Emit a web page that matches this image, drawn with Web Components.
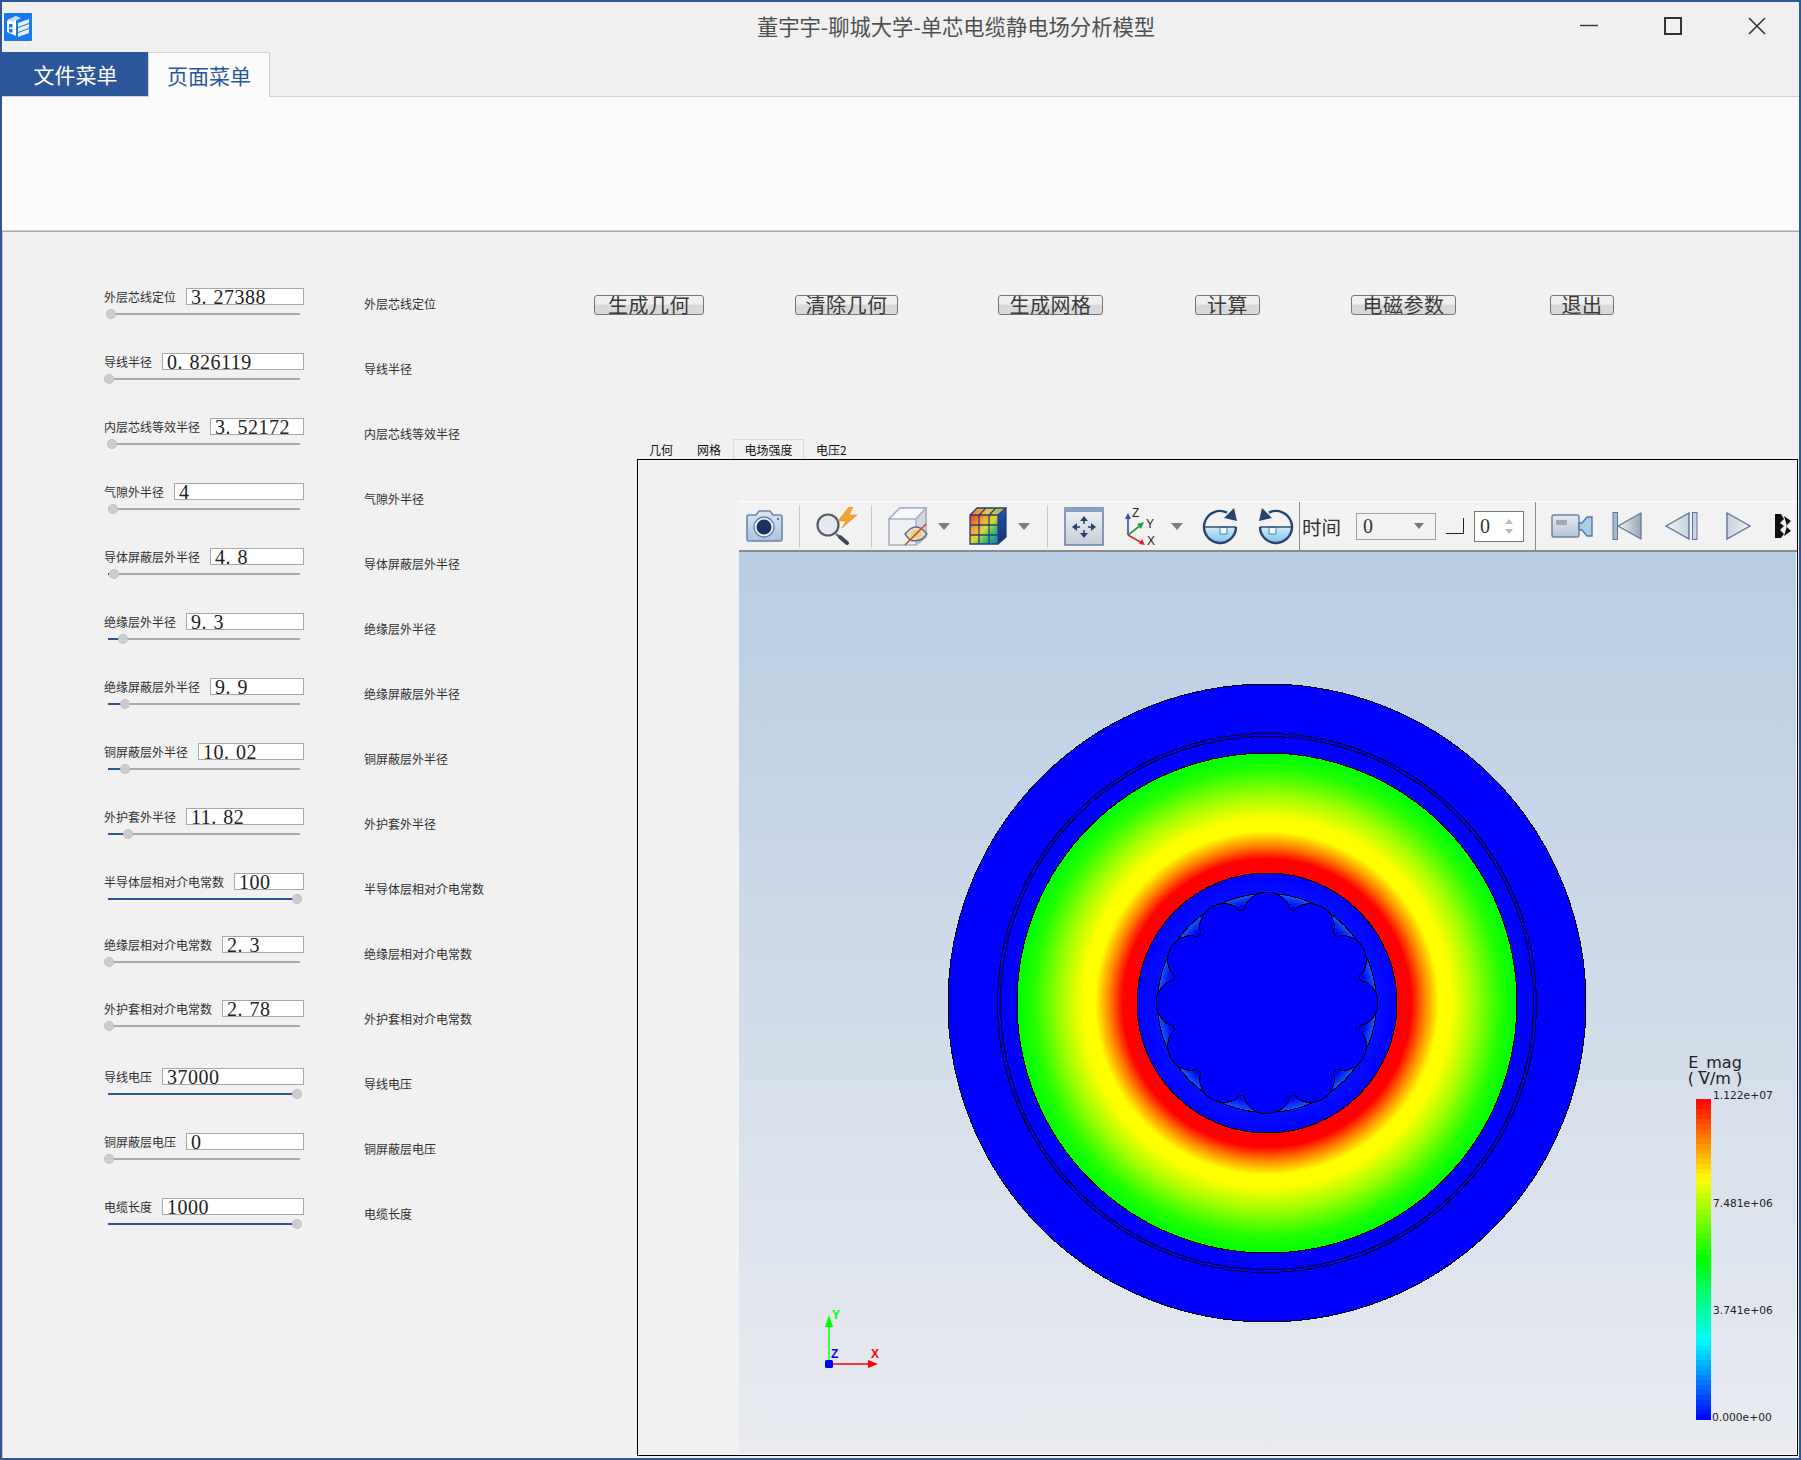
<!DOCTYPE html>
<html lang="zh">
<head>
<meta charset="utf-8">
<title>单芯电缆静电场分析模型</title>
<style>
    html, body { margin: 0; padding: 0; background: #f1f1f1; overflow: hidden; }
    body { font-family: "Noto Sans CJK SC", "Liberation Sans", sans-serif; }
</style>
</head>
<body>
<app-window>
    <title-bar slot="top">董宇宇-聊城大学-单芯电缆静电场分析模型</title-bar>
    <menu-tabs slot="top"></menu-tabs>
    <param-form>
        <param-row label="外层芯线定位" value="3.27388" at="3"></param-row>
        <param-row label="导线半径" value="0.826119" at="1"></param-row>
        <param-row label="内层芯线等效半径" value="3.52172" at="4"></param-row>
        <param-row label="气隙外半径" value="4" at="5"></param-row>
        <param-row label="导体屏蔽层外半径" value="4.8" at="6"></param-row>
        <param-row label="绝缘层外半径" value="9.3" at="15"></param-row>
        <param-row label="绝缘屏蔽层外半径" value="9.9" at="17"></param-row>
        <param-row label="铜屏蔽层外半径" value="10.02" at="17"></param-row>
        <param-row label="外护套外半径" value="11.82" at="20"></param-row>
        <param-row label="半导体层相对介电常数" value="100" at="189"></param-row>
        <param-row label="绝缘层相对介电常数" value="2.3" at="1" lift="2"></param-row>
        <param-row label="外护套相对介电常数" value="2.78" at="1" lift="3"></param-row>
        <param-row label="导线电压" value="37000" at="189"></param-row>
        <param-row label="铜屏蔽层电压" value="0" at="1"></param-row>
        <param-row label="电缆长度" value="1000" at="189"></param-row>
    </param-form>
    <action-bar slot="actions">
        <action-button>生成几何</action-button>
        <action-button style="margin-left:91px;width:103px">清除几何</action-button>
        <action-button style="margin-left:100px;width:105px">生成网格</action-button>
        <action-button style="margin-left:92px;width:65px">计算</action-button>
        <action-button style="margin-left:91px;width:105px">电磁参数</action-button>
        <action-button style="margin-left:94px;width:64px">退出</action-button>
    </action-bar>
    <result-panel slot="panel"></result-panel>
</app-window>

<script>
class AppWindow extends HTMLElement {
    constructor() {
        super();
        this.attachShadow({ mode: "open" });
        this.shadowRoot.innerHTML = `
            <style>
                :host {
                    display: flex;
                    flex-direction: column;
                    box-sizing: border-box;
                    width: 1801px;
                    height: 1460px;
                    border: 2px solid #2b579a;
                    background: #f1f1f1;
                }
                .main {
                    flex: 1;
                    display: flex;
                    min-height: 0;
                    border-left: 1px solid #c8c8c8;
                    margin-left: 0;
                }
                .right {
                    flex: 1;
                    display: flex;
                    flex-direction: column;
                    min-width: 0;
                    padding: 63px 1px 2px 0;
                }
                ::slotted(result-panel) { margin: 124px 0 0 43px; flex: 1; min-height: 0; }
            </style>
            <slot name="top"></slot>
            <div class="main">
                <slot></slot>
                <div class="right">
                    <slot name="actions"></slot>
                    <slot name="panel"></slot>
                </div>
            </div>
        `;
    }
}
customElements.define("app-window", AppWindow);

class TitleBar extends HTMLElement {
    constructor() {
        super();
        this.attachShadow({ mode: "open" });
        this.shadowRoot.innerHTML = `
            <style>
                :host {
                    display: flex;
                    align-items: center;
                    height: 50px;
                    background: #f0f0f0;
                    color: #505050;
                    font-size: 21.3px;
                }
                .logo { margin: 0 0 0 2px; width: 28px; height: 28px; flex: none; }
                .title {
                    flex: 1;
                    text-align: center;
                    padding: 0 0 4px 300px;
                    white-space: nowrap;
                }
                .btns { display: flex; gap: 66px; margin-right: 33px; position: relative; top: -1px; }
                .btns svg { width: 18px; height: 18px; display: block; }
            </style>
            <svg class="logo" viewBox="0 0 28 28">
                <rect width="28" height="28" rx="1" fill="#1878ee"/>
                <path d="M3 8 L12 3 L12 23 L3 19 Z" fill="#fff"/>
                <path d="M12 3 L17 5 L9 9 L3 7 Z" fill="#c9dcf5"/>
                <path d="M14 10 L25 6 V10 L14 14 Z M14 15 L25 11 V15 L14 19 Z M14 20 L25 16 V20 L14 24 Z" fill="#e8f0fb"/>
                <rect x="5" y="11" width="3.5" height="3.5" fill="#1878ee"/>
                <rect x="5" y="16" width="3.5" height="3.5" fill="#1878ee"/>
            </svg>
            <div class="title"><slot></slot></div>
            <div class="btns">
                <svg viewBox="0 0 18 18"><path d="M0 8.5 H18" stroke="#333" stroke-width="1.4"/></svg>
                <svg viewBox="0 0 18 18"><rect x="1" y="1" width="16" height="16" fill="none" stroke="#333" stroke-width="2"/></svg>
                <svg viewBox="0 0 18 18"><path d="M1 1 L17 17 M17 1 L1 17" stroke="#333" stroke-width="1.6"/></svg>
            </div>
        `;
    }
}
customElements.define("title-bar", TitleBar);

class MenuTabs extends HTMLElement {
    constructor() {
        super();
        this.attachShadow({ mode: "open" });
        this.shadowRoot.innerHTML = `
            <style>
                :host { display: block; font-size: 21px; }
                .tabs { display: flex; height: 44px; background: #f0f0f0; }
                .tab { display: flex; align-items: center; justify-content: center; box-sizing: border-box; padding-bottom: 1px; }
                .file { width: 146px; background: #2b579a; color: #fff; padding-left: 1px; }
                .page {
                    width: 122px;
                    background: #fbfbfb;
                    color: #2b579a;
                    border: 1px solid #d2d2d2;
                    border-bottom: none;
                    margin-bottom: -1px;
                    position: relative;
                }
                .ribbon {
                    height: 133px;
                    background: #fbfbfb;
                    border-top: 1px solid #d2d2d2;
                    border-bottom: 1px solid #d2d2d2;
                    box-shadow: 0 1px 0 #a8a8a8;
                    margin-bottom: 1px;
                }
            </style>
            <div class="tabs">
                <div class="tab file">文件菜单</div>
                <div class="tab page">页面菜单</div>
            </div>
            <div class="ribbon"></div>
        `;
    }
}
customElements.define("menu-tabs", MenuTabs);

class ParamForm extends HTMLElement {
    constructor() {
        super();
        this.attachShadow({ mode: "open" });
        this.shadowRoot.innerHTML = `
            <style>
                :host {
                    display: flex;
                    flex-direction: column;
                    gap: 33px;
                    box-sizing: border-box;
                    width: 591px;
                    flex: none;
                    padding: 56px 0 0 101px;
                }
            </style>
            <slot></slot>
        `;
    }
}
customElements.define("param-form", ParamForm);

class ParamRow extends HTMLElement {
    constructor() {
        super();
        var label = this.getAttribute("label");
        var value = this.getAttribute("value").replace(".", '<b>.</b>');
        var at = Number(this.getAttribute("at"));
        var lift = Number(this.getAttribute("lift") || 0);
        this.attachShadow({ mode: "open" });
        this.shadowRoot.innerHTML = `
            <style>
                :host {
                    display: grid;
                    grid-template-columns: 200px 1fr;
                    column-gap: 60px;
                    align-items: center;
                    height: 32px;
                    font-size: 12px;
                    color: #303030;
                }
                .col { align-self: start; }
                .other { padding-bottom: 2px; }
                .top { display: flex; align-items: center; gap: 10px; white-space: nowrap; margin: ${-lift}px 0 ${lift}px; }
                .input {
                    flex: 1;
                    box-sizing: border-box;
                    height: 17px;
                    border: 1px solid #a8a8a8;
                    background: #fff;
                    padding-left: 4px;
                    font: 20px/16px "Liberation Serif", serif;
                    letter-spacing: 0.5px;
                    color: #222;
                }
                .input b { font-weight: normal; letter-spacing: 7px; }
                .track {
                    position: relative;
                    height: 2px;
                    margin: 8px 4px 0;
                    background: #aaa;
                }
                .fill { height: 2px; background: #2b579a; width: ${at}px; }
                .thumb {
                    position: absolute;
                    left: ${at - 5}px;
                    top: -4px;
                    width: 10px;
                    height: 10px;
                    box-sizing: border-box;
                    border-radius: 50%;
                    background: #cdcdcd;
                    border: 1px dotted #b8b8b8;
                }
            </style>
            <div class="col">
                <div class="top">
                    <span>${label}</span>
                    <div class="input">${value}</div>
                </div>
                <div class="track"><div class="fill"></div><div class="thumb"></div></div>
            </div>
            <div class="other">${label}</div>
        `;
    }
}
customElements.define("param-row", ParamRow);

class ActionBar extends HTMLElement {
    constructor() {
        super();
        this.attachShadow({ mode: "open" });
        this.shadowRoot.innerHTML = `
            <style>:host { display: flex; height: 20px; }</style>
            <slot></slot>
        `;
    }
}
customElements.define("action-bar", ActionBar);

class ActionButton extends HTMLElement {
    constructor() {
        super();
        this.attachShadow({ mode: "open" });
        this.shadowRoot.innerHTML = `
            <style>
                :host {
                    display: flex;
                    align-items: center;
                    justify-content: center;
                    box-sizing: border-box;
                    width: 110px;
                    height: 20px;
                    border: 1px solid #777;
                    border-radius: 3px;
                    background: linear-gradient(#efefef 0, #efefef 45%, #d9d9d9 50%, #d9d9d9 100%);
                    color: #3a3a3a;
                    font-size: 20px;
                    line-height: 18px;
                    letter-spacing: 0.5px;
                    white-space: nowrap;
                }
            </style>
            <slot></slot>
        `;
    }
}
customElements.define("action-button", ActionButton);

class ResultPanel extends HTMLElement {
    constructor() {
        super();
        this.attachShadow({ mode: "open" });
        this.shadowRoot.innerHTML = `
            <style>
                :host { display: flex; flex-direction: column; color: #111; font-size: 12px; }
                .tabs { display: flex; height: 20px; line-height: 22px; flex: none; white-space: nowrap; }
                .tabs div { padding: 0 12px; }
                .tabs .on {
                    box-sizing: border-box;
                    width: 71px;
                    border: 1px solid #dcdcdc;
                    border-bottom: none;
                    padding: 0;
                    text-align: center;
                    line-height: 20px;
                }
                .box {
                    flex: 1;
                    min-height: 0;
                    display: flex;
                    flex-direction: column;
                    box-sizing: border-box;
                    border: 1px solid #000;
                    padding: 41px 0 0 101px;
                }
            </style>
            <div class="tabs">
                <div>几何</div><div>网格</div><div class="on">电场强度</div><div>电压2</div>
            </div>
            <div class="box">
                <view-toolbar></view-toolbar>
                <field-view></field-view>
            </div>
        `;
    }
}
customElements.define("result-panel", ResultPanel);

var ROTATE = `
    <defs><linearGradient id="r" x1="0" y1="0" x2="0" y2="1"><stop offset="0" stop-color="#d4ecfa"/><stop offset="1" stop-color="#7cc0ea"/></linearGradient></defs>
    <path d="M2 20 A16 16 0 0 0 34 20 Z" fill="url(#r)"/>
    <path d="M18 20 H25 V27 H18 Z" fill="#e6f4fc" stroke="#2e6ca0" stroke-width=".8"/>
    <path d="M2 20 H34" stroke="#27446f" stroke-width="1.4"/>
    <path d="M25 5.6 A16 16 0 1 0 34 20" fill="none" stroke="#27446f" stroke-width="2.4"/>
    <path d="M35 14 L22 11 L32 1 Z" fill="#27446f"/>`;

var ICONS = {
    camera: [39, 32, `
        <defs><linearGradient id="g" x1="0" y1="0" x2="0" y2="1"><stop offset="0" stop-color="#dbe7f5"/><stop offset="1" stop-color="#a9c3e3"/></linearGradient></defs>
        <path d="M2 7 Q2 5 4 5 H11 L14 1 H25 L28 5 H35 Q37 5 37 7 V29 Q37 31 35 31 H4 Q2 31 2 29 Z" fill="url(#g)" stroke="#6d84a8" stroke-width="1.6"/>
        <circle cx="19" cy="17" r="10" fill="#eef3f9" stroke="#6d84a8" stroke-width="1.4"/>
        <circle cx="19" cy="17" r="7.5" fill="#1c3163"/>
        <circle cx="33" cy="9" r="1.2" fill="#5f7aa3"/>`],
    search: [41, 38, `
        <circle cx="12" cy="18" r="10.5" fill="#e4e9f1" stroke="#5a5a5a" stroke-width="2.2"/>
        <path d="M20 27 L24 30" stroke="#777" stroke-width="2.4"/>
        <path d="M24 30 L31 36" stroke="#3e4a55" stroke-width="4" stroke-linecap="round"/>
        <path d="M33 0 L22 14 H30 L26 21 L41 8 H33 L37 0 Z" fill="#f0a532" stroke="#e08a20" stroke-width=".6"/>`],
    cube: [40, 39, `
        <path d="M1 12 L12 1 H38 V30 L28 38 H1 Z" fill="#eef0f4" stroke="#a6b1c4" stroke-width="1.6"/>
        <path d="M1 12 H28 L38 1 H12 Z" fill="#f6f7f9" stroke="#a6b1c4" stroke-width="1.4"/>
        <path d="M28 12 L38 1 V30 L28 38 Z" fill="#d3d7de" stroke="#a6b1c4" stroke-width="1.4"/>
        <path d="M17 27 L22 22 Q28 18 34 22 L39 27 L34 32 Q28 35 22 33 Z" fill="#efe3b6" stroke="#5a6f95" stroke-width="1.5"/>
        <ellipse cx="28" cy="27" rx="6" ry="4.5" fill="#e8cf8e"/>
        <path d="M17 38 L38 17" stroke="#d0481c" stroke-width="1.6"/>`],
    rubik: [38, 38, `
        <defs>
            <linearGradient id="f" x1="0" y1="0" x2="1" y2="1"><stop offset="0" stop-color="#e8382a"/><stop offset=".3" stop-color="#f0a030"/><stop offset=".5" stop-color="#d8d838"/><stop offset=".7" stop-color="#40c070"/><stop offset="1" stop-color="#1870d0"/></linearGradient>
            <linearGradient id="t" x1="0" y1="0" x2="1" y2="0"><stop offset="0" stop-color="#e87838"/><stop offset=".5" stop-color="#e8c850"/><stop offset="1" stop-color="#80c060"/></linearGradient>
            <linearGradient id="s" x1="0" y1="0" x2="0" y2="1"><stop offset="0" stop-color="#1c58b8"/><stop offset="1" stop-color="#142c80"/></linearGradient>
        </defs>
        <path d="M1 8 L8 1 H37 L29 8 Z" fill="url(#t)"/>
        <path d="M29 8 L37 1 V30 L29 37 Z" fill="url(#s)"/>
        <rect x="1" y="8" width="28" height="29" fill="url(#f)"/>
        <path d="M1 8 H29 V37 H1 Z M10 8 V37 M20 8 V37 M1 18 H29 M1 28 H29 M29 8 L37 1 H8 L1 8 M17 1 L10 8 M27 1 L20 8 M29 18 L37 11 M29 28 L37 21 M37 1 V30 L29 37" fill="none" stroke="#2c3f68" stroke-width="1.3"/>`],
    move: [40, 39, `
        <defs><linearGradient id="m" x1="0" y1="0" x2="0" y2="1"><stop offset="0" stop-color="#f0f2f6"/><stop offset="1" stop-color="#c6ccd8"/></linearGradient></defs>
        <rect x="1" y="1" width="38" height="37" fill="url(#m)" stroke="#6d84a8" stroke-width="1.6"/>
        <rect x="1" y="1" width="38" height="4" fill="#8ca0c2"/>
        <path d="M20 13 V17 M20 23 V27 M12 20 H16 M24 20 H28" stroke="#26436f" stroke-width="1.5"/>
        <path d="M20 9 L16 14 H24 Z M20 31 L16 26 H24 Z M8 20 L13 16 V24 Z M32 20 L27 16 V24 Z" fill="#26436f"/>`],
    axes: [34, 38, `
        <path d="M4 28 V9" stroke="#2c4fb0" stroke-width="1.6"/><path d="M4 6 L1 12 H7 Z" fill="#2c4fb0"/>
        <path d="M4 28 L17 18" stroke="#2a9a40" stroke-width="1.6"/><path d="M20 15 L13 17 L17 22 Z" fill="#2a9a40"/>
        <path d="M4 28 L18 36" stroke="#d82828" stroke-width="1.6"/><path d="M21 38 L15 37 L18 32 Z" fill="#d82828"/>
        <text x="8" y="10" font-family="Liberation Sans" font-size="12" fill="#222">Z</text>
        <text x="22" y="21" font-family="Liberation Sans" font-size="12" fill="#222">Y</text>
        <text x="23" y="38" font-family="Liberation Sans" font-size="12" fill="#222">X</text>`],
    rotcw: [36, 38, ROTATE],
    rotccw: [36, 38, `<g transform="translate(36 0) scale(-1 1)">${ROTATE}</g>`],
    video: [42, 24, `
        <defs><linearGradient id="v" x1="0" y1="0" x2="0" y2="1"><stop offset="0" stop-color="#e6ebf2"/><stop offset="1" stop-color="#b6c4d8"/></linearGradient></defs>
        <rect x="1" y="1" width="27" height="22" rx="2" fill="url(#v)" stroke="#6d84a8" stroke-width="1.5"/>
        <rect x="5" y="6" width="11" height="5" fill="#a0a8b4"/>
        <path d="M28 9 H31 L36 3 H41 V22 H36 L31 16 H28 Z" fill="#a8cfe8" stroke="#56789f" stroke-width="1.4"/>`],
    first: [30, 28, `
        <defs><linearGradient id="a" x1="0" y1="0" x2="1" y2="0"><stop offset="0" stop-color="#eef1f5"/><stop offset="1" stop-color="#9aa6b6"/></linearGradient></defs>
        <rect x="1" y="0.5" width="4.5" height="27" fill="#a8bad2" stroke="#5f7597"/>
        <path d="M6 14 L29 1 V27 Z" fill="url(#a)" stroke="#5f7597" stroke-width="1.2"/>`],
    prev: [33, 28, `
        <defs><linearGradient id="b" x1="0" y1="0" x2="1" y2="0"><stop offset="0" stop-color="#f2f4f7"/><stop offset="1" stop-color="#c8d2de"/></linearGradient></defs>
        <path d="M1 14 L24 1 V27 Z" fill="url(#b)" stroke="#5f7597" stroke-width="1.4"/>
        <rect x="27.5" y="0.5" width="4.5" height="27" fill="#c8d4e4" stroke="#5f7597"/>`],
    play: [25, 28, `
        <defs><linearGradient id="c" x1="0" y1="0" x2="1" y2="0"><stop offset="0" stop-color="#c8d2de"/><stop offset="1" stop-color="#f2f4f7"/></linearGradient></defs>
        <path d="M1 1 L24 14 L1 27 Z" fill="url(#c)" stroke="#5f7597" stroke-width="1.4"/>`],
    blob: [17, 24, `
        <path d="M0 0 H6 L9 5 L5 9 L9 12 L5 16 L9 20 L6 24 H0 Z" fill="#111"/>
        <path d="M9 2 L16 7 L11 12 L16 17 L9 22 L12 12 Z" fill="#111"/>`]
};

class ToolIcon extends HTMLElement {
    constructor() {
        super();
        var icon = ICONS[this.getAttribute("name")];
        this.attachShadow({ mode: "open" });
        this.shadowRoot.innerHTML = `
            <style>:host { display: block; flex: none; width: ${icon[0]}px; height: ${icon[1]}px; }
            svg { display: block; }</style>
            <svg width="${icon[0]}" height="${icon[1]}" viewBox="0 0 ${icon[0]} ${icon[1]}">${icon[2]}</svg>
        `;
    }
}
customElements.define("tool-icon", ToolIcon);

class ViewToolbar extends HTMLElement {
    constructor() {
        super();
        this.attachShadow({ mode: "open" });
        this.shadowRoot.innerHTML = `
            <style>
                :host {
                    display: flex;
                    align-items: center;
                    flex: none;
                    box-sizing: border-box;
                    height: 51px;
                    background: #f2f2f2;
                    border-top: 1px solid #fff;
                    border-bottom: 2px solid #8c8c8c;
                    color: #333;
                }
                .sep { width: 1px; height: 43px; background: #c8c8c8; flex: none; }
                .bar { width: 1px; align-self: stretch; background: #8c8c8c; flex: none; }
                .caret { width: 0; height: 0; flex: none; border: 6px solid transparent; border-top: 7px solid #7c7c7c; border-bottom: none; }
                .time { font-size: 19.5px; width: 40px; flex: none; white-space: nowrap; }
                .combo {
                    box-sizing: border-box;
                    display: flex;
                    align-items: center;
                    justify-content: space-between;
                    flex: none;
                    width: 80px;
                    height: 27px;
                    border: 1px solid #a0a0a0;
                    padding: 0 11px 0 6px;
                    font: 20px "Liberation Serif", serif;
                }
                .combo i { border: 5px solid transparent; border-top: 6px solid #777; border-bottom: none; }
                .spin {
                    box-sizing: border-box;
                    display: flex;
                    align-items: center;
                    justify-content: space-between;
                    flex: none;
                    width: 50px;
                    height: 31px;
                    background: #fff;
                    border: 1px solid #777;
                    padding: 0 10px 0 5px;
                    font: 20px "Liberation Serif", serif;
                }
                .arrows { display: flex; flex-direction: column; gap: 5px; }
                .arrows i { display: block; border: 4px solid transparent; }
                .arrows i:first-child { border-bottom: 5px solid #bbb; border-top: none; }
                .arrows i:last-child { border-top: 5px solid #bbb; border-bottom: none; }
                .end {
                    flex: 1;
                    align-self: stretch;
                    display: flex;
                    align-items: center;
                    margin-left: 11px;
                    background: #f2f2f2;
                }
            </style>
            <tool-icon name="camera" style="margin-left:6px"></tool-icon>
            <div class="sep" style="margin-left:15px"></div>
            <tool-icon name="search" style="margin-left:16px"></tool-icon>
            <div class="sep" style="margin-left:14px"></div>
            <tool-icon name="cube" style="margin-left:16px"></tool-icon>
            <div class="caret" style="margin-left:10px"></div>
            <tool-icon name="rubik" style="margin-left:19px"></tool-icon>
            <div class="caret" style="margin-left:11px"></div>
            <div class="sep" style="margin-left:17px"></div>
            <tool-icon name="move" style="margin-left:16px"></tool-icon>
            <tool-icon name="axes" style="margin-left:20px"></tool-icon>
            <div class="caret" style="margin-left:13px"></div>
            <tool-icon name="rotcw" style="margin-left:19px"></tool-icon>
            <tool-icon name="rotccw" style="margin-left:20px"></tool-icon>
            <div class="bar" style="margin-left:5px"></div>
            <div class="time" style="margin-left:2px">时间</div>
            <div class="combo" style="margin-left:14px"><span>0</span><i></i></div>
            <svg width="18" height="16" style="margin-left:10px;flex:none"><path d="M0 15.5 H17.5 V0" fill="none" stroke="#222"/></svg>
            <div class="spin" style="margin-left:10px"><span>0</span><div class="arrows"><i></i><i></i></div></div>
            <div class="bar" style="margin-left:11px"></div>
            <div class="end">
                <tool-icon name="video" style="margin-left:4px"></tool-icon>
                <tool-icon name="first" style="margin-left:19px"></tool-icon>
                <tool-icon name="prev" style="margin-left:23px"></tool-icon>
                <tool-icon name="play" style="margin-left:28px"></tool-icon>
                <tool-icon name="blob" style="margin-left:24px"></tool-icon>
            </div>
        `;
    }
}
customElements.define("view-toolbar", ViewToolbar);

// 12 rounded strands of the conductor, one arc per lobe and a small fillet in each notch
function conductorPath() {
    function polar(r, deg) {
        var a = deg * Math.PI / 180;
        return (r * Math.cos(a)).toFixed(2) + " " + (r * Math.sin(a)).toFixed(2);
    }
    var d = "M" + polar(100, -12.5);
    for (var k = 0; k < 12; k++) {
        var t = k * 30;
        d += " A24.2 24.2 0 0 1 " + polar(100, t + 12.5);
        d += " A4.4 4.4 0 0 0 " + polar(100, t + 17.5);
    }
    return d + " Z";
}

class FieldView extends HTMLElement {
    constructor() {
        super();
        this.attachShadow({ mode: "open" });
        this.shadowRoot.innerHTML = `
            <style>
                :host {
                    display: block;
                    flex: 1;
                    min-height: 0;
                    position: relative;
                    overflow: hidden;
                    background: linear-gradient(#b9cde4, #e9ebf0);
                    border-right: 1px solid #fff;
                    border-bottom: 1px solid #fff;
                }
                svg { position: absolute; left: 0; top: 0; }
                scalar-bar { position: absolute; left: 940px; top: 0; }
            </style>
            <svg width="1057" height="903" viewBox="0 0 1057 903">
                <defs>
                    <radialGradient id="field" gradientUnits="userSpaceOnUse" cx="0" cy="0" r="250">
                        <stop offset="0.52" stop-color="#ff0000"/>
                        <stop offset="0.576" stop-color="#ff0000"/>
                        <stop offset="0.628" stop-color="#ff8000"/>
                        <stop offset="0.688" stop-color="#ffff00"/>
                        <stop offset="0.736" stop-color="#ffff00"/>
                        <stop offset="0.828" stop-color="#a0ff00"/>
                        <stop offset="0.936" stop-color="#20ff00"/>
                        <stop offset="1" stop-color="#00ff00"/>
                    </radialGradient>
                    <radialGradient id="core" gradientUnits="userSpaceOnUse" cx="0" cy="0" r="130">
                        <stop offset="0.8" stop-color="#0610ff"/>
                        <stop offset="1" stop-color="#0000ff"/>
                    </radialGradient>
                    <radialGradient id="gap" gradientUnits="userSpaceOnUse" cx="0" cy="0" r="110">
                        <stop offset="0.9" stop-color="#0000ff"/>
                        <stop offset="1" stop-color="#1560f0"/>
                    </radialGradient>
                </defs>
                <g transform="translate(528 451)" stroke="#000" stroke-width="1" shape-rendering="crispEdges">
                    <circle r="319" fill="#0000ff"/>
                    <circle r="269.5" fill="none"/>
                    <circle r="266.5" fill="none"/>
                    <circle r="250" fill="url(#field)"/>
                    <circle r="130" fill="url(#core)"/>
                    <circle r="109.5" fill="url(#gap)"/>
                    <path d="${conductorPath()}" fill="#0000ff"/>
                </g>
                <g font-family="Liberation Sans" font-size="12" font-weight="bold">
                    <path d="M90 812 V768" stroke="#00ff00" stroke-width="1.4"/>
                    <path d="M90 763 L86 775 H94 Z" fill="#00ff00"/>
                    <path d="M90 812 H130" stroke="#ff0000" stroke-width="1.4"/>
                    <path d="M139 812 L129 808 V816 Z" fill="#ff0000"/>
                    <rect x="86" y="808" width="8" height="8" rx="1.5" fill="#0000ff"/>
                    <text x="93" y="767" fill="#00ff00">Y</text>
                    <text x="92" y="806" fill="#0000ff">Z</text>
                    <text x="132" y="806" fill="#ff0000">X</text>
                </g>
            </svg>
            <scalar-bar></scalar-bar>
        `;
    }
}
customElements.define("field-view", FieldView);

class ScalarBar extends HTMLElement {
    constructor() {
        super();
        var stops = [[255, 0, 0], [255, 255, 0], [0, 255, 0], [0, 255, 255], [0, 0, 255]];
        var bands = "";
        for (var i = 0; i < 64; i++) {
            var v = (i + 0.5) / 64 * 4;
            var n = Math.floor(v);
            var t = v - n;
            var rgb = stops[n].map((c, j) => Math.round(c + (stops[n + 1][j] - c) * t));
            bands += `<i style="background:rgb(${rgb.join(",")})"></i>`;
        }
        this.attachShadow({ mode: "open" });
        this.shadowRoot.innerHTML = `
            <style>
                :host {
                    display: block;
                    width: 110px;
                    height: 880px;
                    color: #222;
                    font: 10.7px "DejaVu Sans", sans-serif;
                }
                .name {
                    position: absolute;
                    left: -4px;
                    top: 503px;
                    width: 80px;
                    text-align: center;
                    font-size: 16px;
                    line-height: 16px;
                    white-space: pre;
                }
                .bands {
                    position: absolute;
                    left: 17px;
                    top: 547px;
                    width: 15px;
                    height: 321px;
                    display: flex;
                    flex-direction: column;
                }
                .bands i { flex: 1; display: block; }
                .val { position: absolute; left: 34px; line-height: 12px; white-space: nowrap; }
            </style>
            <div class="name">E_mag
( V/m )</div>
            <div class="bands">${bands}</div>
            <div class="val" style="top:538px">1.122e+07</div>
            <div class="val" style="top:646px">7.481e+06</div>
            <div class="val" style="top:753px">3.741e+06</div>
            <div class="val" style="top:860px;left:33px">0.000e+00</div>
        `;
    }
}
customElements.define("scalar-bar", ScalarBar);
</script>
</body>
</html>
